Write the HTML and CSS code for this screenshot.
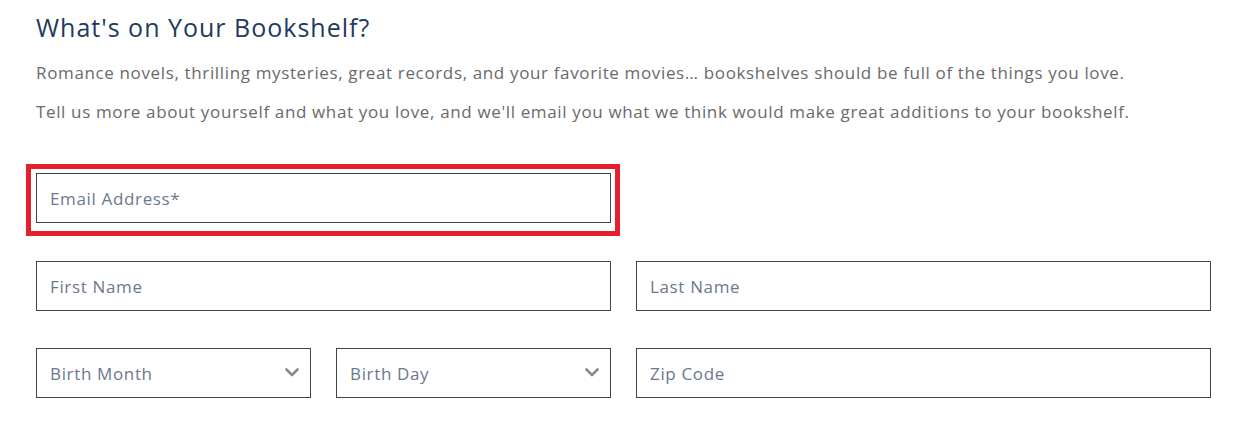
FILE: index.html
```html
<!DOCTYPE html>
<html lang="en">
<head>
<meta charset="utf-8">
<title>What's on Your Bookshelf?</title>
<link rel="stylesheet" href="styles.css">
</head>
<body>
<main class="page">
  <h1 class="title">What's on Your Bookshelf?</h1>
  <p class="lead">Romance novels, thrilling mysteries, great records, and your favorite movies… bookshelves should be full of the things you love.</p>
  <p class="lead">Tell us more about yourself and what you love, and we'll email you what we think would make great additions to your bookshelf.</p>

  <form class="form">
    <div class="field span-2 highlight">
      <input class="input" type="email" placeholder="Email Address*">
    </div>
    <div class="field span-2 row-start">
      <input class="input" type="text" placeholder="First Name">
    </div>
    <div class="field span-2">
      <input class="input" type="text" placeholder="Last Name">
    </div>
    <div class="field select-wrap">
      <div class="input select">Birth Month</div>
      <svg class="chev" viewBox="0 0 14 9" width="14" height="9"><path d="M1.5 1.5 L7 7 L12.5 1.5" fill="none" stroke="#8a8a8a" stroke-width="2.6" stroke-linecap="round" stroke-linejoin="round"/></svg>
    </div>
    <div class="field select-wrap">
      <div class="input select">Birth Day</div>
      <svg class="chev" viewBox="0 0 14 9" width="14" height="9"><path d="M1.5 1.5 L7 7 L12.5 1.5" fill="none" stroke="#8a8a8a" stroke-width="2.6" stroke-linecap="round" stroke-linejoin="round"/></svg>
    </div>
    <div class="field span-2">
      <input class="input" type="text" placeholder="Zip Code">
    </div>
  </form>
</main>
</body>
</html>
```

FILE: styles.css
```css
html, body {
  margin: 0;
  padding: 0;
  background: #ffffff;
}

body {
  font-family: "Open Sans", "Liberation Sans", sans-serif;
}

.page {
  width: 1175px;
  padding: 0 0 0 36px;
}

.title {
  margin: 11px 0 0 0;
  font-size: 25px;
  line-height: 32px;
  font-weight: 400;
  color: #1e3a60;
  letter-spacing: 1px;
}

.lead {
  margin: 0;
  font-size: 17px;
  line-height: 24px;
  color: #6a6a6a;
  letter-spacing: 0.64px;
}

.title + .lead {
  margin-top: 18px;
}

.lead + .lead {
  margin-top: 15px;
}

.form {
  display: grid;
  grid-template-columns: repeat(4, 275px);
  column-gap: 25px;
  row-gap: 37px;
  margin-top: 49px;
}

.field {
  position: relative;
}

.span-2 {
  grid-column: span 2;
}

.row-start {
  grid-column: 1 / span 2;
}

.highlight {
  margin-bottom: 1px;
}

.highlight::after {
  content: "";
  position: absolute;
  top: -9px;
  left: -10px;
  right: -9px;
  bottom: -13px;
  border: 5px solid #e3202b;
  pointer-events: none;
}

.input {
  display: block;
  box-sizing: border-box;
  width: 100%;
  height: 50px;
  margin: 0;
  padding: 0 13px;
  border: 1px solid #444444;
  border-radius: 0;
  background: #ffffff;
  font-family: "Open Sans", "Liberation Sans", sans-serif;
  font-size: 17px;
  letter-spacing: 0.65px;
  color: #6b7890;
  outline: none;
}

.input::placeholder {
  color: #6b7890;
  opacity: 1;
}

.select {
  display: flex;
  align-items: center;
  padding-top: 1px;
}

.chev {
  position: absolute;
  right: 12px;
  top: 20px;
}
```
